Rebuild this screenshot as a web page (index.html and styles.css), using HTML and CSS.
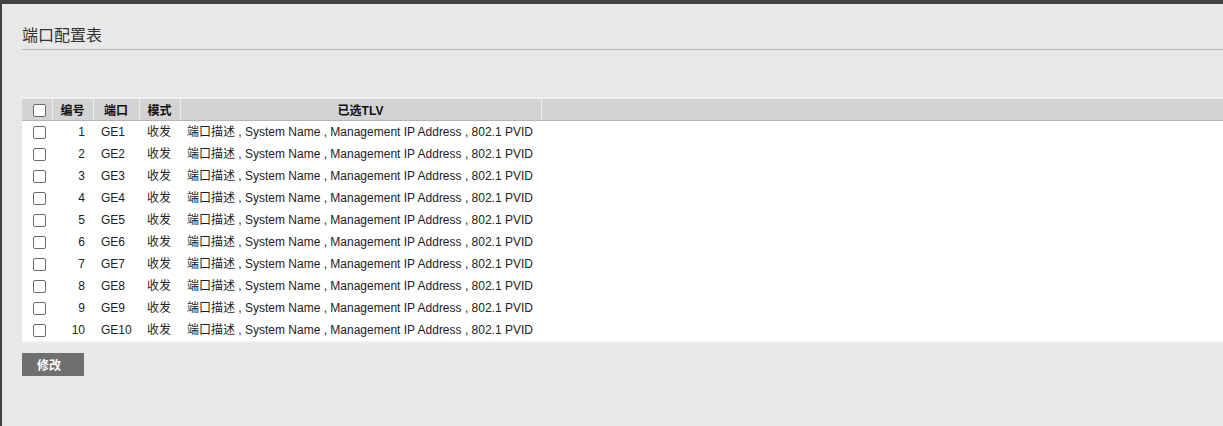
FILE: index.html
```html
<!DOCTYPE html>
<html lang="zh">
<head>
<meta charset="utf-8">
<title>端口配置表</title>
<link rel="stylesheet" href="styles.css">
</head>
<body>
<div class="page">
  <h1 class="title">端口配置表</h1>
  <div class="table-wrap">
    <table class="grid">
      <thead>
        <tr>
          <th class="c-chk"><span class="box"></span></th>
          <th class="c-no">编号</th>
          <th class="c-port">端口</th>
          <th class="c-mode">模式</th>
          <th class="c-tlv">已选TLV</th>
          <th class="c-rest"></th>
        </tr>
      </thead>
      <tbody>
        <tr><td class="c-chk"><span class="box"></span></td><td class="c-no">1</td><td class="c-port">GE1</td><td class="c-mode">收发</td><td class="c-tlv">端口描述 , System Name , Management IP Address , 802.1 PVID</td><td></td></tr>
        <tr><td class="c-chk"><span class="box"></span></td><td class="c-no">2</td><td class="c-port">GE2</td><td class="c-mode">收发</td><td class="c-tlv">端口描述 , System Name , Management IP Address , 802.1 PVID</td><td></td></tr>
        <tr><td class="c-chk"><span class="box"></span></td><td class="c-no">3</td><td class="c-port">GE3</td><td class="c-mode">收发</td><td class="c-tlv">端口描述 , System Name , Management IP Address , 802.1 PVID</td><td></td></tr>
        <tr><td class="c-chk"><span class="box"></span></td><td class="c-no">4</td><td class="c-port">GE4</td><td class="c-mode">收发</td><td class="c-tlv">端口描述 , System Name , Management IP Address , 802.1 PVID</td><td></td></tr>
        <tr><td class="c-chk"><span class="box"></span></td><td class="c-no">5</td><td class="c-port">GE5</td><td class="c-mode">收发</td><td class="c-tlv">端口描述 , System Name , Management IP Address , 802.1 PVID</td><td></td></tr>
        <tr><td class="c-chk"><span class="box"></span></td><td class="c-no">6</td><td class="c-port">GE6</td><td class="c-mode">收发</td><td class="c-tlv">端口描述 , System Name , Management IP Address , 802.1 PVID</td><td></td></tr>
        <tr><td class="c-chk"><span class="box"></span></td><td class="c-no">7</td><td class="c-port">GE7</td><td class="c-mode">收发</td><td class="c-tlv">端口描述 , System Name , Management IP Address , 802.1 PVID</td><td></td></tr>
        <tr><td class="c-chk"><span class="box"></span></td><td class="c-no">8</td><td class="c-port">GE8</td><td class="c-mode">收发</td><td class="c-tlv">端口描述 , System Name , Management IP Address , 802.1 PVID</td><td></td></tr>
        <tr><td class="c-chk"><span class="box"></span></td><td class="c-no">9</td><td class="c-port">GE9</td><td class="c-mode">收发</td><td class="c-tlv">端口描述 , System Name , Management IP Address , 802.1 PVID</td><td></td></tr>
        <tr><td class="c-chk"><span class="box"></span></td><td class="c-no">10</td><td class="c-port">GE10</td><td class="c-mode">收发</td><td class="c-tlv">端口描述 , System Name , Management IP Address , 802.1 PVID</td><td></td></tr>
      </tbody>
    </table>
  </div>
  <button class="btn" type="button">修改</button>
</div>
</body>
</html>
```
FILE: styles.css
```css
html, body {
  margin: 0;
  padding: 0;
  height: 100%;
}
body {
  background: #e8e8e8;
  border-top: 4px solid #434343;
  border-left: 2px solid #434343;
  box-sizing: border-box;
  font-family: "Liberation Sans", Arial, "Noto Sans CJK SC", sans-serif;
  font-size: 12px;
  color: #222;
  overflow: hidden;
}
.page {
  padding: 0 0 0 20px;
}
.title {
  margin: 0;
  padding-top: 22px;
  height: 23px;
  line-height: 20px;
  font-size: 16px;
  font-weight: normal;
  color: #333;
  border-bottom: 1px solid #b8b8b8;
  font-family: "Liberation Sans", "Noto Sans CJK SC", sans-serif;
}
.table-wrap {
  margin-top: 47px;
  border-top: 2px solid #f0f0f0;
  border-bottom: 2px solid #f0f0f0;
  background: #fff;
  width: 1220px;
}
.grid {
  border-collapse: collapse;
  width: 100%;
  table-layout: fixed;
}
.grid th {
  background: #d3d3d3;
  height: 21px;
  padding: 0;
  font-weight: bold;
  font-size: 12px;
  color: #111;
  border-left: 1px solid #ececec;
  border-bottom: 1px solid #b4b4b4;
  text-align: center;
}
.grid th:first-child {
  border-left: none;
}
.grid td {
  height: 22px;
  padding: 0;
  line-height: 20px;
  font-size: 12px;
  color: #222;
  white-space: nowrap;
}
.c-chk { width: 30px; text-align: center; }
.c-no { width: 40px; }
.c-port { width: 45px; }
.c-mode { width: 40px; }
.c-tlv { width: 360px; }
td.c-chk, th.c-chk { padding-left: 5px !important; box-sizing: border-box; }
td.c-no { text-align: right; padding-right: 8px !important; box-sizing: border-box; }
td.c-port { padding-left: 8px !important; }
td.c-mode { padding-left: 8px !important; }
td.c-tlv { padding-left: 7px !important; }
.box {
  display: inline-block;
  width: 11px;
  height: 11px;
  border: 1px solid #6b6b6b;
  border-radius: 2px;
  background: #fff;
  vertical-align: middle;
  position: relative;
  top: 0;
}
.btn {
  margin-top: 10px;
  display: block;
  width: 62px;
  height: 23px;
  padding: 0 0 0 15px;
  text-align: left;
  background: #6f6f6f;
  color: #fff;
  border: none;
  font-family: "Liberation Sans", "Noto Sans CJK SC", sans-serif;
  font-size: 12px;
  font-weight: bold;
  cursor: pointer;
}
```
